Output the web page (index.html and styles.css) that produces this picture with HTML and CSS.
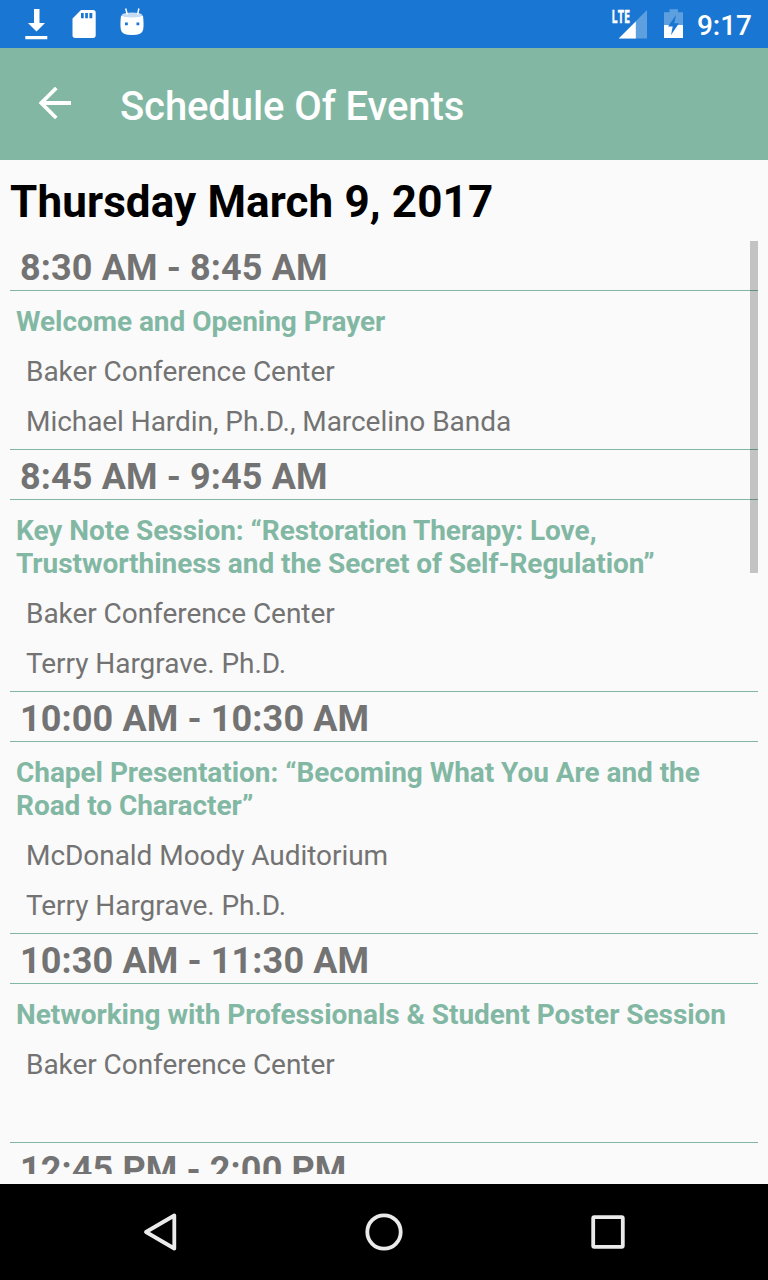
FILE: index.html
```html
<!DOCTYPE html>
<html lang="en">
<head>
    <meta charset="UTF-8">
    <meta name="viewport" content="width=device-width, initial-scale=1.0">
    <title>Schedule Of Events</title>
    <link rel="stylesheet" href="styles.css">
</head>
<body>
    <div class="status-bar">
        <svg class="status-left" width="128" height="48" viewBox="24 0 128 48" fill="#fff">
            <!-- download -->
            <path d="M34 9h5.500v14H45L36.500 31.500 28 23h6zM25.300 36h22v3.200h-22z"/>
            <!-- sd card -->
            <path fill-rule="evenodd" d="M81 10h12q2.700 0 2.700 2.700v22.600q0 2.700-2.700 2.700H75.200q-2.700 0-2.700-2.700V18.500zM81 13v5.200h2.700V13zm4.200 0v5.200h2.700V13zm4.200 0v5.200h2.900V13z"/>
            <!-- android -->
            <path d="M121 15.500q11 3 22 0 1 9 .2 14-.8 5.500-11.200 5.500t-11.200-5.500q-.8-5 .2-14z"/>
            <ellipse cx="132" cy="15" rx="10.200" ry="2.500" fill="#c5dcf4"/>
            <path d="M127.300 14.500l-1.600-6M137.600 14.500l1.300-6" stroke="#fff" stroke-width="1.500"/>
            <path fill="#1976d2" d="M125 22.500h2.800v2.800H125zm11.500 0h2.800v2.800h-2.800z"/>
        </svg>
        <div class="status-right">
            <svg width="78" height="48" viewBox="608 0 78 48" fill="#fff">
                <!-- signal -->
                <path opacity=".3" d="M647 10v28.500h-28.500z"/>
                <path d="M635.800 21.500v17h-17z"/>
                <text class="lte" x="611.500" y="22.500" textLength="18.500" lengthAdjust="spacingAndGlyphs">LTE</text>
                <!-- battery -->
                <path opacity=".3" d="M669.500 9.200h8.500v3h5V25h-19V12.200h5.500z"/>
                <path d="M664 25h19v13h-19z"/>
                <path fill="#1976d2" d="M676 15l-8 11.500h4.700l-1.700 8.500 8-11.700h-4.700z"/>
            </svg>
            <span class="clock">9:17</span>
        </div>
    </div>

    <div class="toolbar">
        <svg class="back" width="34" height="34" viewBox="38 87 34 34" fill="none" stroke="#fff" stroke-width="3.800">
            <path d="M71 103H42M56.300 88L41.300 103l15 15"/>
        </svg>
        <h1>Schedule Of Events</h1>
    </div>

    <div class="content">
        <h2>Thursday March 9, 2017</h2>
        <div class="schedule">
            <h3 class="time">8:30 AM - 8:45 AM</h3>
            <div class="event">
                <h4>Welcome and Opening Prayer</h4>
                <p>Baker Conference Center</p>
                <p>Michael Hardin, Ph.D., Marcelino Banda</p>
            </div>
            <h3 class="time">8:45 AM - 9:45 AM</h3>
            <div class="event">
                <h4>Key Note Session: “Restoration Therapy: Love, Trustworthiness and the Secret of Self-Regulation”</h4>
                <p>Baker Conference Center</p>
                <p>Terry Hargrave. Ph.D.</p>
            </div>
            <h3 class="time">10:00 AM - 10:30 AM</h3>
            <div class="event">
                <h4>Chapel Presentation: “Becoming What You Are and the Road to Character”</h4>
                <p>McDonald Moody Auditorium</p>
                <p>Terry Hargrave. Ph.D.</p>
            </div>
            <h3 class="time">10:30 AM - 11:30 AM</h3>
            <div class="event">
                <h4>Networking with Professionals &amp; Student Poster Session</h4>
                <p>Baker Conference Center</p>
                <p></p>
            </div>
            <h3 class="time">12:45 PM - 2:00 PM</h3>
            <div class="scrollbar"></div>
        </div>
    </div>

    <div class="nav-bar">
        <svg width="48" height="48" viewBox="136 1208 48 48"><path d="M174.300 1215.500v33L146 1232z"/></svg>
        <svg width="48" height="48" viewBox="360 1208 48 48"><circle cx="384" cy="1232" r="16.700"/></svg>
        <svg width="48" height="48" viewBox="584 1208 48 48"><rect x="593.200" y="1217.200" width="29.600" height="29.600" rx="1"/></svg>
    </div>
</body>
</html>
```
FILE: styles.css
```css
* { box-sizing: border-box; margin: 0; padding: 0; }
body { font-family: Roboto, sans-serif; background: #fafafa; width: 768px; height: 1280px; display: flex; flex-direction: column; overflow: hidden; }

.status-bar { height: 48px; background: #1976d2; display: flex; justify-content: space-between; padding: 0 16px 0 24px; flex: none; }
.status-right { display: flex; gap: 11px; }
.clock { color: #fff; font-size: 28px; font-weight: 500; line-height: 52px; }
.lte { font: bold 17px "Open Sans", sans-serif; stroke: #fff; stroke-width: 0.3px; }

.toolbar { height: 112px; background: #82b8a3; display: flex; align-items: center; padding-left: 38px; flex: none; }
.toolbar h1 { color: #fff; font-size: 40px; font-weight: 500; line-height: 47px; letter-spacing: -0.1px; padding-top: 4px; margin-left: 48px; }
.back { margin-bottom: 0; }

.content { flex: 1; min-height: 0; padding: 16px 10px 10px; display: flex; flex-direction: column; }
.content h2 { color: #000; font-size: 44px; line-height: 52px; letter-spacing: 0.12px; margin-bottom: 13px; }

.schedule { flex: 1; min-height: 0; overflow: hidden; position: relative; color: #737373; }
.time { font-size: 36px; line-height: 42px; letter-spacing: 0.12px; padding: 6px 10px 1px; border-bottom: 1px solid #82b8a3; }
.event { font-size: 28px; line-height: 33px; letter-spacing: -0.05px; padding: 14px 6px 11px; border-bottom: 1px solid #82b8a3; display: flex; flex-direction: column; gap: 17px; }
.event h4 { color: #82b8a3; font-size: 28px; }
.event p { padding-left: 10px; min-height: 33px; }
.scrollbar { position: absolute; top: 0; right: 0; width: 8px; height: 332px; background: rgba(0, 0, 0, 0.22); }

.nav-bar { height: 96px; background: #000; display: flex; justify-content: center; align-items: center; gap: 176px; flex: none; }
.nav-bar svg { fill: none; stroke: #ebebeb; stroke-width: 3.800; stroke-linejoin: round; }
```
